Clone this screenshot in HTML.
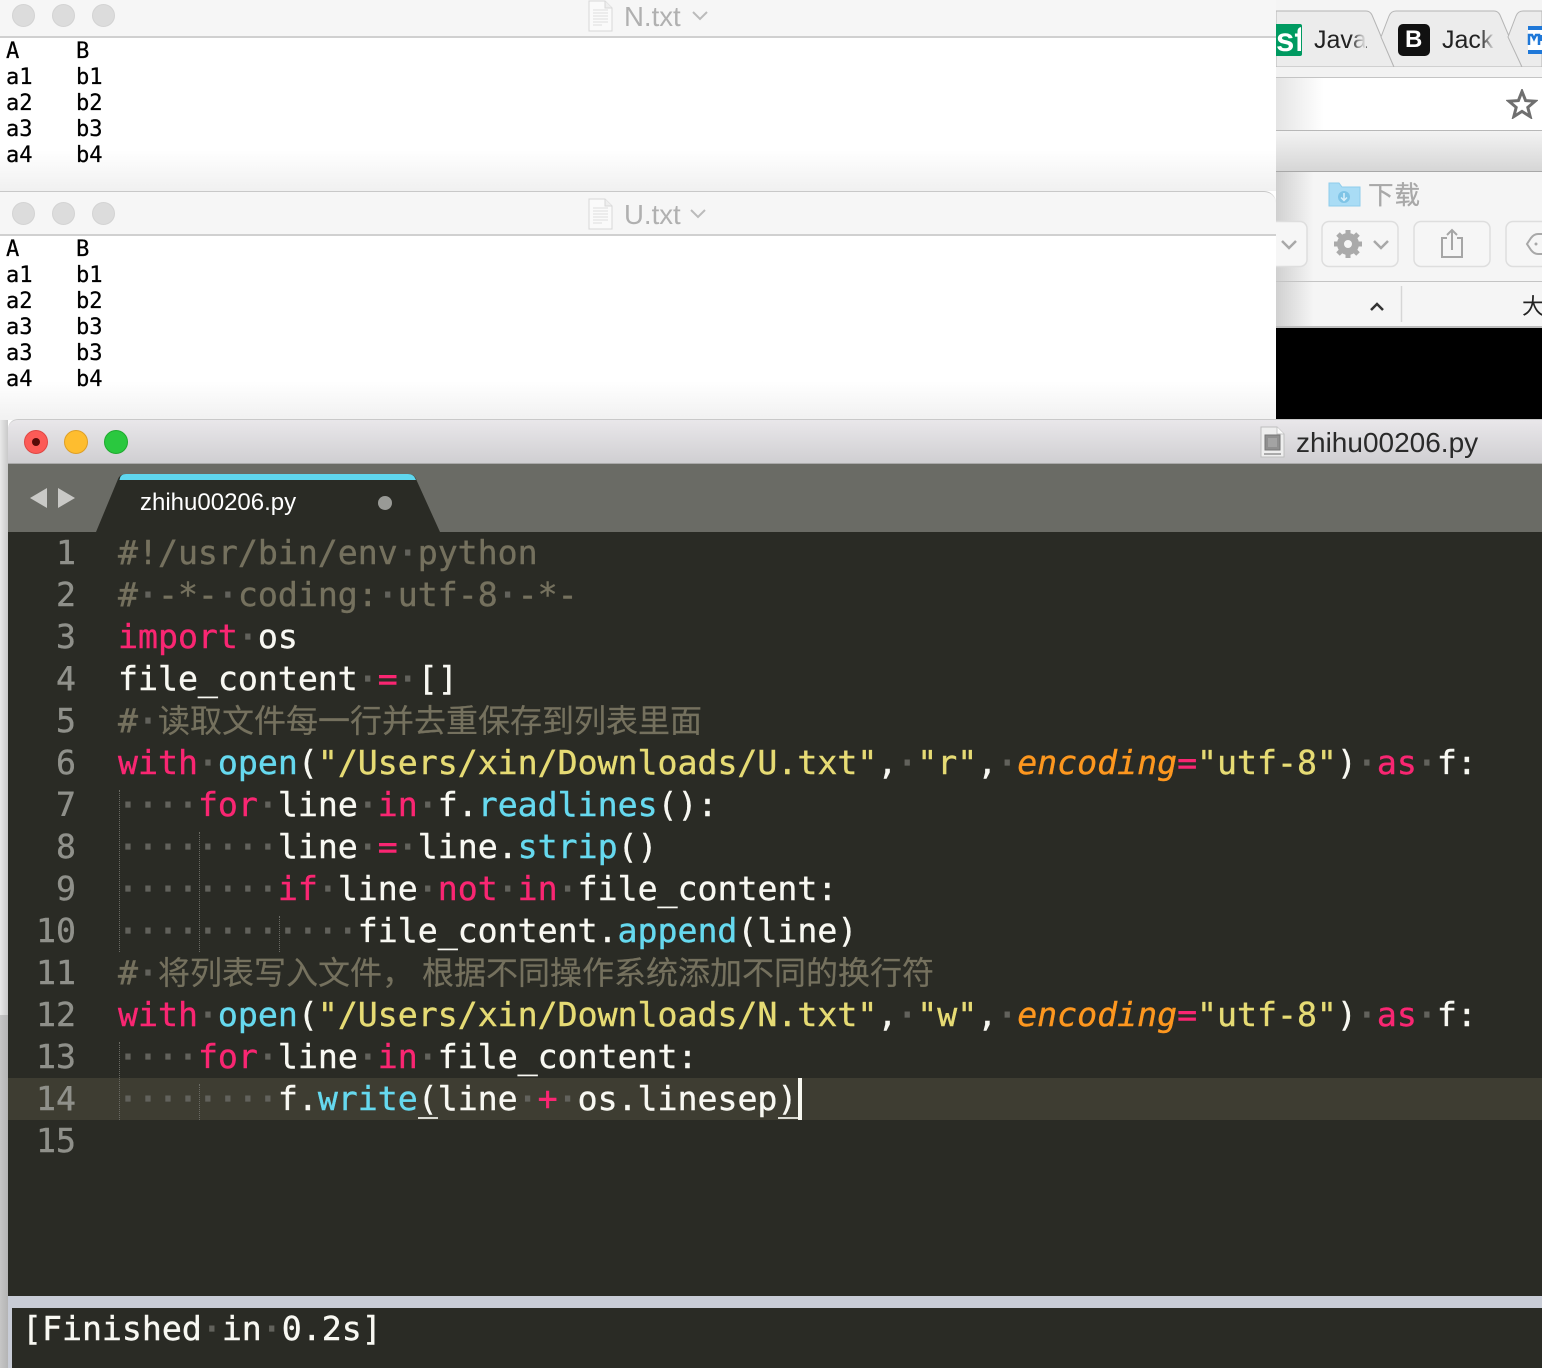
<!DOCTYPE html>
<html><head><meta charset="utf-8">
<style>
html,body{margin:0;padding:0;background:#fff}
body{width:1542px;height:1368px;position:relative;overflow:hidden;font-family:"Liberation Sans","Noto Sans CJK SC",sans-serif}
.a{position:absolute}
.t{position:absolute;left:0;width:1276px;background:#f6f6f6;border-bottom:2px solid #d0d0d0;box-sizing:border-box}
.light{position:absolute;width:23px;height:23px;border-radius:50%;background:#dcdcdc;border:1px solid #d3d3d3;box-sizing:border-box}
.ttl{position:absolute;font-size:27.6px;color:#b0b0b0;line-height:34px;white-space:pre}
.mono{position:absolute;font:22.1px/26px "DejaVu Sans Mono",monospace;color:#000;white-space:pre;margin:0;-webkit-text-stroke:.25px #000}
.l{position:absolute;left:118px;height:42px;font:33.2px/42px "DejaVu Sans Mono",monospace;color:#f8f8f2;white-space:pre;-webkit-text-stroke:.4px}
.n{position:absolute;left:20px;width:56px;text-align:right;height:42px;font:33.2px/42px "DejaVu Sans Mono",monospace;color:#8f908a;-webkit-text-stroke:.4px}
.c{color:#75715e}.k{color:#f92672}.b{color:#66d9ef}.s{color:#e6db74}.o{color:#fd971f;font-style:italic}.d{color:#62625c;-webkit-text-stroke:1.2px #62625c}
.z{font:32px/42px "Noto Sans CJK SC",sans-serif;color:#75715e;display:inline-block;vertical-align:top;position:relative;top:-2px;-webkit-text-stroke:.2px}
.g{position:absolute;width:0;border-left:1px dotted #6a6a64;height:42px}
</style></head><body>
<!-- background browser / finder -->
<div class="a" style="left:1276px;top:0;width:266px;height:68px;background:#f4f4f4"></div>
<svg class="a" style="left:1276px;top:0" width="266" height="78" viewBox="1276 0 266 78">
<path d="M1276 67H1542" stroke="#b0b0b0" stroke-width="1.5"/>
<path d="M1276 11H1366Q1370 11 1372 15L1394 67H1276Z" fill="#ececec" stroke="#b5b5b5"/>
<path d="M1394 67L1381 37L1389 16Q1391 11 1396 11H1494Q1498 11 1500 15L1522 67Z" fill="#ececec" stroke="#b5b5b5"/>
<path d="M1522 67L1508 37L1516 16Q1518 11 1523 11H1542V67Z" fill="#ececec" stroke="#b5b5b5"/>
<rect x="1268" y="24" width="34" height="32" rx="2" fill="#009a61"/>
<rect x="1398" y="24" width="32" height="32" rx="5" fill="#111"/>
<rect x="1528" y="26" width="14" height="28" fill="#fff"/><rect x="1528" y="26" width="14" height="4" fill="#1f78d8"/><rect x="1528" y="50" width="14" height="4" fill="#1f78d8"/><path d="M1529 45V35H1532L1534 39L1536 35H1539V45M1541 35V41" stroke="#1f78d8" stroke-width="2.5" fill="none"/>
</svg>
<div class="a" style="left:1276px;top:21px;font:bold 33px/38px 'Liberation Sans',sans-serif;color:#fff;width:25px;overflow:hidden;text-align:right;white-space:pre">sf</div>
<div class="a" style="left:1405px;top:24px;font:bold 24px/32px 'Liberation Sans',sans-serif;color:#fff">B</div>
<div class="a" style="left:1314px;top:24px;font:25px/32px 'Liberation Sans',sans-serif;color:#222">Java</div>
<div class="a" style="left:1442px;top:24px;font:25px/32px 'Liberation Sans',sans-serif;color:#222">Jack</div>
<div class="a" style="left:1350px;top:20px;width:16px;height:40px;background:linear-gradient(90deg,rgba(236,236,236,0),#ececec)"></div>
<div class="a" style="left:1480px;top:20px;width:15px;height:40px;background:linear-gradient(90deg,rgba(236,236,236,0),#ececec)"></div>
<div class="a" style="left:1276px;top:67px;width:266px;height:10px;background:#f2f2f2"></div>
<div class="a" style="left:1276px;top:77px;width:266px;height:54px;background:linear-gradient(90deg,#e4e4e4,#fff 18%);border-top:1px solid #c4c4c4;border-bottom:1px solid #b8b8b8;box-sizing:border-box"></div>
<svg class="a" style="left:1506px;top:89px" width="32" height="30" viewBox="0 0 32 30"><path d="M16 2.5L19.6 11.6L29 12.2L21.8 18.4L24.2 27.6L16 22.4L7.8 27.6L10.2 18.4L3 12.2L12.4 11.6Z" fill="none" stroke="#6f6f6f" stroke-width="3"/></svg>
<div class="a" style="left:1276px;top:131px;width:266px;height:41px;background:linear-gradient(#f3f3f3,#d6d6d6);border-bottom:1px solid #a8a8a8;box-sizing:border-box"></div>
<div class="a" style="left:1276px;top:172px;width:266px;height:156px;background:linear-gradient(90deg,#d0d0d0,#f5f5f5 14%)"></div>
<div class="a" style="left:1276px;top:281px;width:266px;height:1px;background:#c4c4c4"></div>
<div class="a" style="left:1276px;top:326px;width:266px;height:2px;background:#bdbdbd"></div>
<svg class="a" style="left:1276px;top:172px" width="266" height="156" viewBox="1276 172 266 156">
<path d="M1329 183H1339L1342 187H1360V206H1329Z" fill="#a9dcf5" stroke="#8fcdec"/>
<circle cx="1344" cy="197" r="6" fill="#7fc4e6"/><path d="M1344 193V200M1341 197.5L1344 200.5L1347 197.500" stroke="#d8f0fb" stroke-width="1.5" fill="none"/>
<rect x="1266" y="221.500" width="41" height="45" rx="7" fill="#f6f6f6" stroke="#dedede" stroke-width="1.5"/>
<path d="M1282 241L1289 248L1296 241" stroke="#a8a8a8" stroke-width="2.5" fill="none"/>
<rect x="1322" y="221.500" width="76" height="45" rx="7" fill="#f6f6f6" stroke="#dedede" stroke-width="1.5"/>
<rect x="1414" y="221.500" width="76" height="45" rx="7" fill="#f6f6f6" stroke="#dedede" stroke-width="1.5"/>
<rect x="1506" y="221.500" width="60" height="45" rx="7" fill="#f6f6f6" stroke="#dedede" stroke-width="1.5"/>
<circle cx="1348" cy="244" r="7.500" fill="none" stroke="#aaa" stroke-width="7"/>
<path d="M1348 230V236M1348 252V258M1334 244H1340M1356 244H1362M1338 234L1342 238M1354 250L1358 254M1358 234L1354 238M1342 250L1338 254" stroke="#aaa" stroke-width="5"/>
<path d="M1374 241L1381 248L1388 241" stroke="#a8a8a8" stroke-width="2.5" fill="none"/>
<path d="M1447 238H1442V257H1462V238H1457M1452 250V231M1447 235L1452 230L1457 235" stroke="#a6a6a6" stroke-width="2" fill="none"/>
<path d="M1542 234H1538Q1534 234 1531 238L1527 244L1531 250Q1534 254 1538 254H1542" stroke="#a8a8a8" stroke-width="2" fill="none"/><circle cx="1536" cy="244" r="1.500" fill="#a8a8a8"/>
<path d="M1371 310L1377 304L1383 310" stroke="#333" stroke-width="2.500" fill="none"/>
<path d="M1401.500 286V322" stroke="#d6d6d6" stroke-width="1.500"/>
</svg>
<div class="a" style="left:1368px;top:177px;font:25.500px/34px 'Noto Sans CJK SC',sans-serif;color:#a8a8a8;letter-spacing:1px;-webkit-text-stroke:.3px">下载</div>
<div class="a" style="left:1522px;top:288px;width:20px;overflow:hidden;font:22px/34px 'Noto Sans CJK SC',sans-serif;color:#222">大</div>
<div class="a" style="left:1276px;top:328px;width:266px;height:92px;background:#000"></div>

<!-- N.txt -->
<div class="a" style="left:0;top:0;width:1276px;height:192px;background:linear-gradient(#fff 150px,#f0f0f0)"></div>
<div class="t" style="top:0;height:38px"></div>
<div class="light" style="left:12px;top:4px"></div><div class="light" style="left:52px;top:4px"></div><div class="light" style="left:92px;top:4px"></div>
<svg class="a" style="left:588px;top:0" width="26" height="32" viewBox="0 0 26 32"><path d="M1 1H17L24 8V31H1Z" fill="#fafafa" stroke="#d8d8d8"/><path d="M17 1V8H24" fill="#eee" stroke="#d8d8d8"/><path d="M5 10H20M5 13H20M5 16H20M5 19H20M5 22H20M5 25H14" stroke="#dedede"/></svg>
<div class="ttl" style="left:624px;top:0">N.txt</div>
<svg class="a" style="left:691px;top:10px" width="18" height="12"><path d="M2 2L9 9L16 2" stroke="#bbb" stroke-width="2" fill="none"/></svg>
<pre class="mono" style="left:6px;top:38px">A
a1
a2
a3
a4</pre>
<pre class="mono" style="left:76px;top:38px">B
b1
b2
b3
b4</pre>

<!-- U.txt -->
<div class="a" style="left:0;top:191px;width:1276px;height:229px;background:linear-gradient(#fff 190px,#f1f1f1)"></div>
<div class="t" style="top:191px;height:45px;border-top:1px solid #c8c8c8;border-radius:0 12px 0 0"></div>
<div class="light" style="left:12px;top:202px"></div><div class="light" style="left:52px;top:202px"></div><div class="light" style="left:92px;top:202px"></div>
<svg class="a" style="left:588px;top:198px" width="26" height="32" viewBox="0 0 26 32"><path d="M1 1H17L24 8V31H1Z" fill="#fafafa" stroke="#d8d8d8"/><path d="M17 1V8H24" fill="#eee" stroke="#d8d8d8"/><path d="M5 10H20M5 13H20M5 16H20M5 19H20M5 22H20M5 25H14" stroke="#dedede"/></svg>
<div class="ttl" style="left:624px;top:198px">U.txt</div>
<svg class="a" style="left:689px;top:208px" width="18" height="12"><path d="M2 2L9 9L16 2" stroke="#bbb" stroke-width="2" fill="none"/></svg>
<pre class="mono" style="left:6px;top:236px">A
a1
a2
a3
a3
a4</pre>
<pre class="mono" style="left:76px;top:236px">B
b1
b2
b3
b3
b4</pre>

<!-- left strip -->
<div class="a" style="left:0;top:420px;width:8px;height:595px;background:linear-gradient(90deg,#e9e9e9,#c9c9c9)"></div>
<div class="a" style="left:0;top:1015px;width:8px;height:353px;background:linear-gradient(90deg,#c6c6c6,#b4b4b4)"></div>

<!-- sublime window -->
<div class="a" style="left:8px;top:419px;width:1534px;height:45px;background:linear-gradient(#e9e7ea,#d0cfd2);border-top:1px solid #c9c9c9;border-top-left-radius:10px;border-bottom:1px solid #aaa;box-sizing:border-box"></div>
<div class="a" style="left:24px;top:430px;width:24px;height:24px;border-radius:50%;background:#fc5b57;border:1px solid #df4744;box-sizing:border-box"></div>
<div class="a" style="left:32px;top:438px;width:8px;height:8px;border-radius:50%;background:#570b08"></div>
<div class="a" style="left:64px;top:430px;width:24px;height:24px;border-radius:50%;background:#febd2f;border:1px solid #de9f26;box-sizing:border-box"></div>
<div class="a" style="left:104px;top:430px;width:24px;height:24px;border-radius:50%;background:#2ac83f;border:1px solid #1faa2f;box-sizing:border-box"></div>
<svg class="a" style="left:1260px;top:426px" width="26" height="32" viewBox="0 0 26 32"><path d="M1 1H17L24 8V31H1Z" fill="#eeeeee" stroke="#bdbdbd"/><path d="M17 1V8H24" fill="#fafafa" stroke="#c5c5c5"/><rect x="5" y="9" width="15" height="15" fill="#8f8f8f" stroke="#777"/><rect x="8" y="12" width="9" height="9" fill="#a3a3a3"/><path d="M4 28H21" stroke="#aaa" stroke-width="2"/></svg>
<div class="a" style="left:1296px;top:426px;font:28px/34px 'Liberation Sans',sans-serif;color:#2a2a2a;white-space:pre">zhihu00206.py</div>

<div class="a" style="left:8px;top:464px;width:1534px;height:68px;background:#6a6b65"></div>
<svg class="a" style="left:8px;top:464px" width="500" height="68" viewBox="8 464 500 68">
<path d="M30 498L47 488V508Z" fill="#c9c9c6"/><path d="M58 488L75 498L58 508Z" fill="#c9c9c6"/>
<path d="M96 532L118 479Q120 474 126 474H408Q414 474 416 479L440 532Z" fill="#2a2b25"/>
<path d="M119.500 480L120 478Q121 474 126 474H408Q413 474 415 478L416 480Z" fill="#5fd6ee"/>
<circle cx="385" cy="503" r="7" fill="#999a96"/>
</svg>
<div class="a" style="left:140px;top:488px;font:24px/30px 'Liberation Sans',sans-serif;color:#fff;white-space:pre">zhihu00206.py</div>

<div class="a" style="left:8px;top:532px;width:1534px;height:764px;background:#2a2b25"></div>
<div class="a" style="left:8px;top:1078px;width:1534px;height:42px;background:#3e3d32"></div>

<div class="g" style="left:119px;top:790px;height:162px"></div>
<div class="g" style="left:199px;top:832px;height:120px"></div>
<div class="g" style="left:279px;top:916px;height:36px"></div>
<div class="g" style="left:119px;top:1042px;height:78px"></div>
<div class="g" style="left:199px;top:1084px;height:36px"></div>

<div class="n" style="top:532px">1</div>
<div class="n" style="top:574px">2</div>
<div class="n" style="top:616px">3</div>
<div class="n" style="top:658px">4</div>
<div class="n" style="top:700px">5</div>
<div class="n" style="top:742px">6</div>
<div class="n" style="top:784px">7</div>
<div class="n" style="top:826px">8</div>
<div class="n" style="top:868px">9</div>
<div class="n" style="top:910px">10</div>
<div class="n" style="top:952px">11</div>
<div class="n" style="top:994px">12</div>
<div class="n" style="top:1036px">13</div>
<div class="n" style="top:1078px">14</div>
<div class="n" style="top:1120px">15</div>

<div class="l" style="top:532px"><span class="c">#!/usr/bin/env</span><span class="d">·</span><span class="c">python</span></div>
<div class="l" style="top:574px"><span class="c">#</span><span class="d">·</span><span class="c">-*-</span><span class="d">·</span><span class="c">coding:</span><span class="d">·</span><span class="c">utf-8</span><span class="d">·</span><span class="c">-*-</span></div>
<div class="l" style="top:616px"><span class="k">import</span><span class="d">·</span>os</div>
<div class="l" style="top:658px">file_content<span class="d">·</span><span class="k">=</span><span class="d">·</span>[]</div>
<div class="l" style="top:700px"><span class="c">#</span><span class="d">·</span><span class="z">读取文件每一行并去重保存到列表里面</span></div>
<div class="l" style="top:742px"><span class="k">with</span><span class="d">·</span><span class="b">open</span>(<span class="s">"/Users/xin/Downloads/U.txt"</span>,<span class="d">·</span><span class="s">"r"</span>,<span class="d">·</span><span class="o">encoding</span><span class="k">=</span><span class="s">"utf-8"</span>)<span class="d">·</span><span class="k">as</span><span class="d">·</span>f:</div>
<div class="l" style="top:784px"><span class="d">····</span><span class="k">for</span><span class="d">·</span>line<span class="d">·</span><span class="k">in</span><span class="d">·</span>f.<span class="b">readlines</span>():</div>
<div class="l" style="top:826px"><span class="d">········</span>line<span class="d">·</span><span class="k">=</span><span class="d">·</span>line.<span class="b">strip</span>()</div>
<div class="l" style="top:868px"><span class="d">········</span><span class="k">if</span><span class="d">·</span>line<span class="d">·</span><span class="k">not</span><span class="d">·</span><span class="k">in</span><span class="d">·</span>file_content:</div>
<div class="l" style="top:910px"><span class="d">············</span>file_content.<span class="b">append</span>(line)</div>
<div class="l" style="top:952px"><span class="c">#</span><span class="d">·</span><span class="z">将列表写入文件</span><span class="z" style="width:40px">，</span><span class="z">根据不同操作系统添加不同的换行符</span></div>
<div class="l" style="top:994px"><span class="k">with</span><span class="d">·</span><span class="b">open</span>(<span class="s">"/Users/xin/Downloads/N.txt"</span>,<span class="d">·</span><span class="s">"w"</span>,<span class="d">·</span><span class="o">encoding</span><span class="k">=</span><span class="s">"utf-8"</span>)<span class="d">·</span><span class="k">as</span><span class="d">·</span>f:</div>
<div class="l" style="top:1036px"><span class="d">····</span><span class="k">for</span><span class="d">·</span>line<span class="d">·</span><span class="k">in</span><span class="d">·</span>file_content:</div>
<div class="l" style="top:1078px"><span class="d">········</span>f.<span class="b">write</span>(line<span class="d">·</span><span class="k">+</span><span class="d">·</span>os.linesep)</div>
<div class="a" style="left:418px;top:1117px;width:20px;height:2px;background:#d8d8d0"></div>
<div class="a" style="left:778px;top:1117px;width:20px;height:2px;background:#d8d8d0"></div>
<div class="a" style="left:798px;top:1078px;width:4px;height:42px;background:#f8f8f0"></div>

<!-- output panel -->
<div class="a" style="left:8px;top:1296px;width:1534px;height:72px;background:#c8ccd6"></div>
<div class="a" style="left:12px;top:1308px;width:1530px;height:60px;background:#2a2b25"></div>
<div class="l" style="left:22px;top:1308px">[Finished<span class="d">·</span>in<span class="d">·</span>0.2s]</div>
</body></html>
